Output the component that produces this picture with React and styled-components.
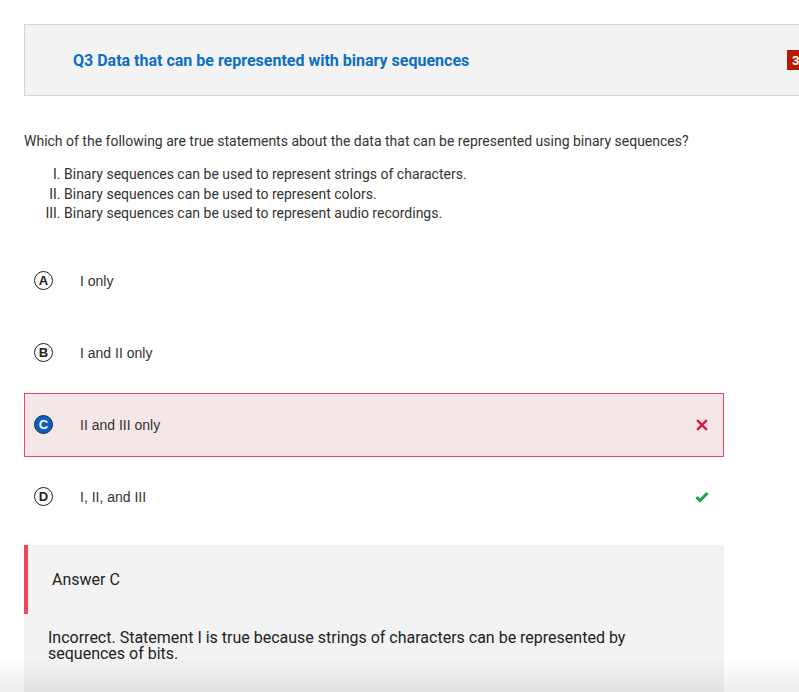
import React from "react";
import styled, { createGlobalStyle } from "styled-components";

const Global = createGlobalStyle`
  html, body { margin: 0; padding: 0; background: #fff; overflow: hidden; }
  body { font-family: Roboto, "Liberation Sans", Arial, sans-serif; color: #333; }
`;

const Page = styled.div`
  width: 799px;
  height: 692px;
  overflow: hidden;
  position: relative;
  padding-top: 24px;
  box-sizing: border-box;
`;

const Header = styled.div`
  margin-left: 24px;
  width: 820px;
  height: 72px;
  box-sizing: border-box;
  border: 1px solid #d4d4d4;
  background: #f3f3f3;
  display: flex;
  align-items: center;
  justify-content: space-between;
  padding: 0 32px 0 48px;
`;

const Title = styled.h2`
  margin: 0;
  font-family: Roboto, sans-serif;
  font-weight: 700;
  font-size: 16px;
  color: #0b6ec8;
`;

const Badge = styled.span`
  width: 24px;
  height: 20px;
  background: #b51a00;
  color: #fff;
  font-family: Roboto, sans-serif;
  font-weight: 700;
  font-size: 13px;
  display: flex;
  align-items: center;
  padding-left: 5px;
  box-sizing: border-box;
`;

const Body = styled.div`
  padding: 0 24px;
`;

const Question = styled.p`
  margin: 35px 0 0;
  font-size: 14px;
  line-height: 20px;
  color: #333;
`;

const Statements = styled.ol`
  list-style: upper-roman;
  margin: 14px 0 0;
  padding-left: 40px;
  font-size: 14px;
  line-height: 19.5px;
  color: #333;
`;

const Options = styled.div`
  margin-top: 25px;
  display: flex;
  flex-direction: column;
  gap: 8px;
  width: 700px;
`;

const Option = styled.div`
  height: 64px;
  box-sizing: border-box;
  display: flex;
  align-items: center;
  padding: 0 13px 0 9px;
  border: 1px solid ${(p) => (p.$wrong ? "#e8475f" : "transparent")};
  background: ${(p) => (p.$wrong ? "#f5e6e7" : "transparent")};
`;

const Letter = styled.span`
  width: 19px;
  height: 19px;
  border-radius: 50%;
  box-sizing: border-box;
  border: ${(p) => (p.$selected ? "1.5px solid #1d2a3a" : "1.2px solid #222")};
  background: ${(p) => (p.$selected ? "#0b5fbf" : "#fff")};
  color: ${(p) => (p.$selected ? "#fff" : "#222")};
  font-family: "Liberation Sans", Arial, sans-serif;
  font-weight: 700;
  font-size: 13px;
  display: flex;
  align-items: center;
  justify-content: center;
  flex-shrink: 0;
`;

const OptionText = styled.span`
  margin-left: 27px;
  flex: 1;
  font-family: "Liberation Sans", Arial, sans-serif;
  font-size: 14px;
  color: #333;
`;

const Mark = styled.span`
  width: 16px;
  height: 16px;
  display: flex;
  align-items: center;
  justify-content: center;
`;

const AnswerPanel = styled.div`
  margin-top: 16px;
  width: 700px;
  background: #f3f3f3;
  height: 200px;
`;

const AnswerHead = styled.div`
  height: 69px;
  border-left: 4px solid #f0435e;
  display: flex;
  align-items: center;
  padding-left: 24px;
  font-size: 16px;
  color: #222;
`;

const Explanation = styled.p`
  margin: 0;
  padding: 16px 60px 0 24px;
  font-size: 16px;
  line-height: 16px;
  color: #222;
`;

const Fade = styled.div`
  position: absolute;
  left: 0;
  right: 0;
  bottom: 0;
  height: 34px;
  background: linear-gradient(to bottom, rgba(0,0,0,0), rgba(0,0,0,0.07));
  pointer-events: none;
`;

const Cross = () => (
  <svg width="12" height="12" viewBox="0 0 12 12">
    <path d="M2 2 L10 10 M10 2 L2 10" stroke="#d8143f" strokeWidth="2.4" strokeLinecap="square" />
  </svg>
);

const Check = () => (
  <svg width="14" height="12" viewBox="0 0 14 12">
    <path d="M1.5 6.2 L5 9.6 L12.5 2" stroke="#1ca64a" strokeWidth="3" fill="none" />
  </svg>
);

const options = [
  { l: "A", t: "I only" },
  { l: "B", t: "I and II only" },
  { l: "C", t: "II and III only", wrong: true },
  { l: "D", t: "I, II, and III", correct: true },
];

export default function App() {
  return (
    <Page>
      <Global />
      <Header>
        <Title>Q3 Data that can be represented with binary sequences</Title>
        <Badge>3</Badge>
      </Header>
      <Body>
        <Question>
          Which of the following are true statements about the data that can be represented using binary sequences?
        </Question>
        <Statements>
          <li>Binary sequences can be used to represent strings of characters.</li>
          <li>Binary sequences can be used to represent colors.</li>
          <li>Binary sequences can be used to represent audio recordings.</li>
        </Statements>
        <Options>
          {options.map((o) => (
            <Option key={o.l} $wrong={o.wrong}>
              <Letter $selected={o.wrong}>{o.l}</Letter>
              <OptionText>{o.t}</OptionText>
              <Mark>{o.wrong ? <Cross /> : o.correct ? <Check /> : null}</Mark>
            </Option>
          ))}
        </Options>
        <AnswerPanel>
          <AnswerHead>Answer C</AnswerHead>
          <Explanation>
            Incorrect. Statement I is true because strings of characters can be represented by sequences of bits.
          </Explanation>
        </AnswerPanel>
      </Body>
      <Fade />
    </Page>
  );
}
